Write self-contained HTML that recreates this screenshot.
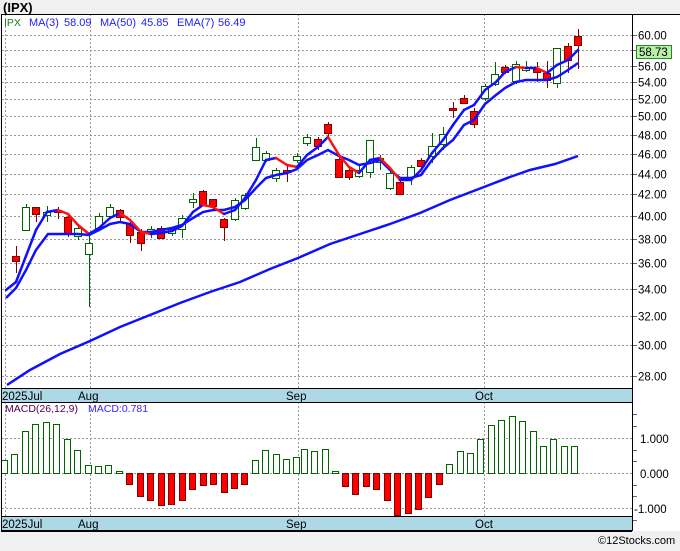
<!DOCTYPE html>
<html><head><meta charset="utf-8"><style>
html,body{margin:0;padding:0;background:#f0f0f0;}
body{width:680px;height:546px;overflow:hidden;font-family:"Liberation Sans",sans-serif;}
svg text{font-family:"Liberation Sans",sans-serif;}
</style></head><body>
<svg id="c" width="680" height="546" xmlns="http://www.w3.org/2000/svg">
<rect x="0" y="0" width="680" height="546" fill="#f0f0f0"/>
<rect x="1" y="14" width="679" height="517" fill="#fff"/>
<text x="3" y="12" font-size="13" font-weight="bold" fill="#000">(IPX)</text>
<g id="g"></g>
</svg>
<script>
var ns="http://www.w3.org/2000/svg",g=document.getElementById('g');
function el(t,a,txt){var e=document.createElementNS(ns,t);for(var k in a)e.setAttribute(k,a[k]);if(txt)e.textContent=txt;g.appendChild(e);return e;}
function py(p){return 1867-447.5*Math.log(p);}
[60,58,56,54,52,50,48,46,44,42,40,38,36,34,32,30,28].forEach(function(p){var y=Math.round(py(p))+.5;
 el('line',{x1:2,x2:632,y1:y,y2:y,stroke:'#999','stroke-dasharray':'2,2'});
 el('line',{x1:632,x2:637,y1:y,y2:y,stroke:'#666'});
 if(p!=58)el('text',{x:638,y:y+4,'font-size':'11.5',fill:'#000'},p.toFixed(2));});
[5,90,298,484].forEach(function(x){el('line',{x1:x+.5,x2:x+.5,y1:14,y2:388,stroke:'#999','stroke-dasharray':'2,2'});el('line',{x1:x+.5,x2:x+.5,y1:402,y2:516,stroke:'#999','stroke-dasharray':'2,2'});});
[438,473,508].forEach(function(y){el('line',{x1:2,x2:632,y1:y+.5,y2:y+.5,stroke:'#999','stroke-dasharray':'2,2'});});
var C=[[16,256,261,246,273,0],[26,207,230,204,230,1],[36,207,214,207,222,0],[47,212,215,206,222,1],[58,210,212,207,219,0],[68,217,233,213,237,0],[78,228,236,225,240,1],[89,243,254,235,307,1],[99,216,228,213,230,1],[110,207,216,204,218,1],[120,210,217,209,222,0],[130,224,235,222,243,0],[141,232,243,229,251,0],[151,229,233,226,238,1],[161,228,238,226,238,0],[172,229,233,227,236,1],[182,218,229,215,238,1],[193,199,202,193,208,1],[203,191,205,190,206,0],[213,199,206,199,210,0],[224,219,227,218,241,0],[235,200,219,198,221,1],[245,195,208,193,210,1],[256,147,160,138,160,1],[266,153,160,151,162,1],[276,170,178,168,182,1],[287,170,172,165,182,0],[297,156,160,153,163,1],[307,137,143,134,146,1],[318,139,146,137,150,0],[328,124,133,122,136,0],[339,159,177,157,177,0],[349,170,177,167,180,0],[359,170,176,166,178,1],[370,140,172,140,178,1],[380,158,162,155,170,1],[390,173,188,170,190,1],[400,182,194,180,194,0],[411,167,177,165,185,1],[421,160,166,158,168,0],[432,146,156,133,163,1],[443,134,144,127,150,1],[453,108,110,102,118,0],[464,98,103,95,103,0],[474,111,124,108,128,0],[485,86,98,84,101,1],[495,74,84,62,86,1],[505,67,72,65,74,0],[516,64,81,61,84,1],[526,68,70,61,72,1],[537,69,72,62,82,0],[547,73,80,61,88,0],[557,48,83,48,88,1],[568,46,60,43,73,0],[578,36,45,29,69,0]];
C.forEach(function(c){var col=c[5]?'#006400':'#800000';
 el('line',{x1:c[0]+.5,x2:c[0]+.5,y1:c[3],y2:c[4],stroke:col});
 var h=Math.max(1,c[2]-c[1]);
 el('rect',{x:c[0]-3.5,y:c[1]+.5,width:7,height:h,fill:c[5]?'#fff':'#f00',stroke:col});});
el('path',{d:'M7,385 L30,370 L60,354 L90,341 L120,327 L150,315 L180,303 L210,292 L240,282 L270,269 L298,258 L330,244 L360,234 L390,224 L420,213 L450,200 L484,187 L510,177 L530,170 L555,164 L578,156',fill:'none',stroke:'#1010ff','stroke-width':2.5});
var E=[[6,298],[16,288],[26,270],[36,250],[48,234],[58,234],[68,234],[78,234],[89,235],[99,230],[110,224],[120,222],[130,224],[141,232],[151,232],[161,230],[172,228],[182,225],[193,218],[203,212],[213,210],[224,210],[235,207],[245,200],[256,188],[266,178],[276,175],[287,173],[297,169],[307,160],[318,155],[328,150],[339,156],[349,160],[359,165],[370,163],[380,160],[390,170],[400,178],[411,178],[421,175],[432,160],[443,148],[453,140],[464,125],[474,120],[485,104],[496,95],[505,88],[516,82],[526,80],[537,80],[547,80],[557,77],[568,70],[578,63]];
el('path',{d:'M'+E.map(function(p){return p.join(',')}).join(' L'),fill:'none',stroke:'#1010ff','stroke-width':2.5});
var M=[[6,290],[16,282],[26,256],[36,230],[47,212],[58,210],[68,214],[78,225],[89,234],[99,228],[110,218],[120,213],[130,220],[141,232],[151,234],[161,233],[172,231],[182,226],[193,212],[203,205],[213,207],[224,214],[235,210],[245,198],[256,180],[266,160],[276,158],[287,165],[297,167],[307,155],[318,147],[328,137],[339,155],[349,167],[359,173],[370,160],[380,158],[390,168],[400,180],[411,180],[421,170],[432,153],[443,140],[453,125],[464,110],[474,105],[485,90],[496,82],[505,72],[516,67],[526,68],[537,68],[547,73],[557,65],[568,60],[578,50]];
for(var i=1;i<M.length;i++){var a=M[i-1],b=M[i];el('line',{x1:a[0],y1:a[1],x2:b[0],y2:b[1],stroke:b[1]>a[1]?'#ff1010':'#1010ff','stroke-width':2.5,'stroke-linecap':'round'});}
el('rect',{x:636.5,y:45.5,width:35,height:13,fill:'#b8f0a8',stroke:'#228822'});
el('text',{x:639,y:56,'font-size':'11.5',fill:'#000'},'58.73');
el('text',{x:4,y:26,'font-size':'10.5',fill:'#1a7a1a'},'IPX');
[[29,'MA(3)'],[64,'58.09'],[100,'MA(50)'],[141,'45.85'],[177,'EMA(7)'],[218,'56.49']].forEach(function(t){el('text',{x:t[0],y:26,'font-size':'11',fill:'#2020ff'},t[1]);});
var B=[[5,460],[15,454],[26,431],[36,424],[47,422],[57,424],[68,439],[78,450],[89,465],[99,466],[109,465],[120,471],[130,484],[141,496],[151,500],[162,505],[172,504],[183,500],[193,489],[204,485],[214,484],[225,492],[235,488],[245,484],[256,460],[266,450],[277,454],[287,459],[297,457],[305,449],[315,451],[326,449],[336,471],[346,486],[356,494],[367,486],[377,489],[388,500],[398,515],[409,513],[419,509],[429,497],[440,484],[450,464],[461,451],[471,453],[481,439],[492,425],[502,420],[513,416],[523,421],[534,431],[544,446],[554,439],[565,446],[575,446]];
B.forEach(function(b){var z=473,up=b[1]<z;
 el('rect',{x:b[0]-3.5,y:(up?b[1]:z)+.5,width:6,height:Math.abs(b[1]-z)||1,fill:up?'#fff':'#f00',stroke:up?'#006400':'#800000'});});
el('text',{x:5,y:412,'font-size':'10.5',fill:'#500050'},'MACD(26,12,9)');
el('text',{x:88,y:412,'font-size':'10.5',fill:'#4020ff'},'MACD:0.781');
[[438,'1.000'],[473,'0.000'],[508,'-1.000']].forEach(function(t){el('text',{x:t[1][0]=='-'?634:640,y:t[0]+5,'font-size':'11.5',fill:'#000'},t[1]);});
[414,426,450,461,485,496,520].forEach(function(y){el('line',{x1:632,x2:637,y1:y+.5,y2:y+.5,stroke:'#666'});});
[388,516].forEach(function(y){el('rect',{x:1,y:y,width:631,height:14,fill:'#add8e6'});
 el('line',{x1:1,x2:632,y1:y+.5,y2:y+.5,stroke:'#000'});el('line',{x1:1,x2:632,y1:y+14.5,y2:y+14.5,stroke:'#000'});
 [[2,'2025Jul'],[78,'Aug'],[286,'Sep'],[475,'Oct']].forEach(function(d){el('text',{x:d[0],y:y+12,'font-size':'11.5',fill:'#000'},d[1]);});});
el('line',{x1:1.5,x2:1.5,y1:14,y2:531,stroke:'#000'});
el('line',{x1:632.5,x2:632.5,y1:14,y2:531,stroke:'#000'});
el('line',{x1:1,x2:680,y1:14.5,y2:14.5,stroke:'#000'});
el('line',{x1:1,x2:632,y1:531.5,y2:531.5,stroke:'#000'});
el('rect',{x:0,y:532,width:680,height:14,fill:'#f0f0f0'});
el('text',{x:598,y:544,'font-size':'11',fill:'#000'},'\u00a912Stocks.com');
</script>
</body></html>
